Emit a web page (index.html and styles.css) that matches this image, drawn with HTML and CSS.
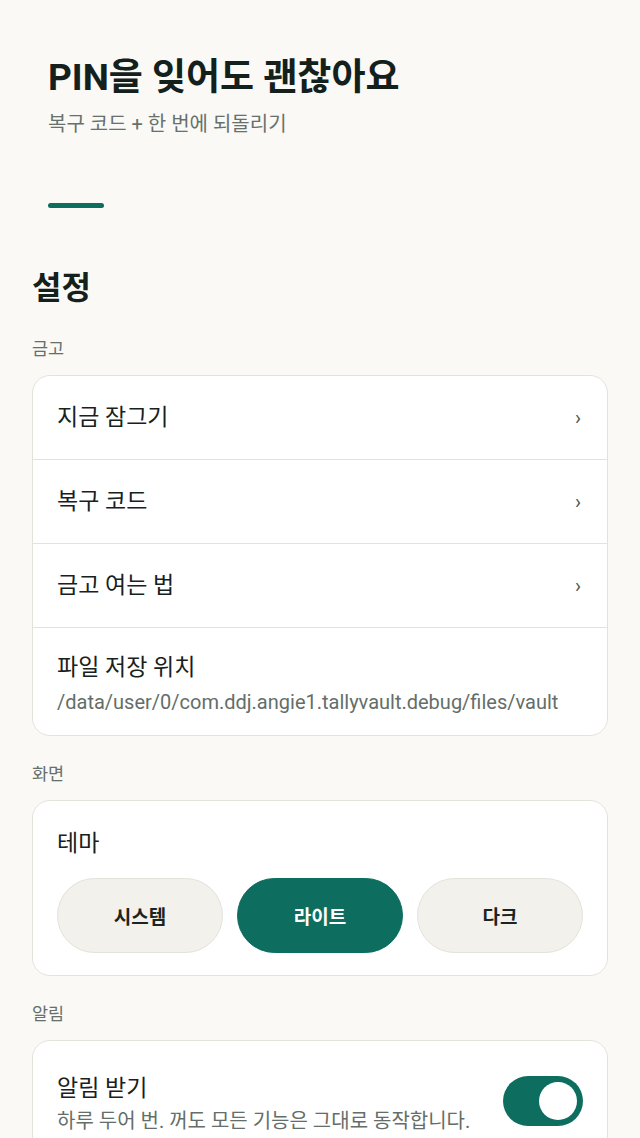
FILE: index.html
```html
<!DOCTYPE html>
<html lang="ko">
<head>
<meta charset="utf-8">
<link rel="stylesheet" href="styles.css">
</head>
<body>
<div class="page">
  <header class="hero">
    <h1 class="hero-title">PIN을 잊어도 괜찮아요</h1>
    <p class="hero-sub">복구 코드 + 한 번에 되돌리기</p>
    <div class="hero-bar"></div>
  </header>

  <h2 class="page-title">설정</h2>

  <section class="section">
    <div class="section-label">금고</div>
    <div class="card">
      <div class="row"><span class="row-title">지금 잠그기</span><span class="chev">›</span></div>
      <div class="row"><span class="row-title">복구 코드</span><span class="chev">›</span></div>
      <div class="row"><span class="row-title">금고 여는 법</span><span class="chev">›</span></div>
      <div class="row row-stack">
        <span class="row-title">파일 저장 위치</span>
        <span class="row-desc">/data/user/0/com.ddj.angie1.tallyvault.debug/files/vault</span>
      </div>
    </div>
  </section>

  <section class="section">
    <div class="section-label">화면</div>
    <div class="card theme-card">
      <div class="row-title">테마</div>
      <div class="seg">
        <button class="seg-btn">시스템</button>
        <button class="seg-btn active">라이트</button>
        <button class="seg-btn">다크</button>
      </div>
    </div>
  </section>

  <section class="section">
    <div class="section-label">알림</div>
    <div class="card">
      <div class="row row-switch">
        <div class="row-text">
          <span class="row-title">알림 받기</span>
          <span class="row-desc">하루 두어 번. 꺼도 모든 기능은 그대로 동작합니다.</span>
        </div>
        <div class="switch on"><span class="thumb"></span></div>
      </div>
    </div>
  </section>
</div>
</body>
</html>
```

FILE: styles.css
```css
* { box-sizing: border-box; }
html, body {
  margin: 0;
  padding: 0;
  background: #faf9f6;
}
body {
  font-family: Roboto, "Noto Sans CJK KR", sans-serif;
  color: #17211d;
}
.page {
  padding: 0 32px 40px 32px;
}
.hero {
  padding: 55px 16px 0 16px;
}
.hero-title {
  margin: 0;
  font-size: 37px;
  line-height: 46px;
  font-weight: 700;
  color: #14201c;
}
.hero-sub {
  margin: 9px 0 0 0;
  font-size: 20px;
  line-height: 28px;
  color: #67716c;
}
.hero-bar {
  margin-top: 65px;
  width: 56px;
  height: 5px;
  border-radius: 3px;
  background: #0d6e5f;
}
.page-title {
  margin: 60px 0 30px 0;
  font-size: 32px;
  line-height: 40px;
  font-weight: 700;
  color: #14201c;
}
.section + .section {
  margin-top: 27px;
}
.section-label {
  font-size: 17.5px;
  line-height: 22px;
  color: #66706b;
  margin-bottom: 15px;
}
.card {
  background: #ffffff;
  border: 1.5px solid #e3e2dc;
  border-radius: 18px;
  overflow: hidden;
}
.row {
  display: flex;
  align-items: center;
  justify-content: space-between;
  min-height: 84px;
  padding: 0 24px;
  border-bottom: 1px solid #e3e2dc;
}
.row:last-child { border-bottom: none; }
.row-title {
  font-size: 23px;
  line-height: 32px;
  color: #17211d;
}
.chev {
  font-size: 20px;
  line-height: 20px;
  color: #4d5753;
  padding-right: 2px;
}
.row-stack {
  flex-direction: column;
  align-items: flex-start;
  justify-content: flex-start;
  padding: 24px 24px 19px 24px;
  gap: 4px;
}
.row-desc {
  font-size: 20px;
  line-height: 28px;
  color: #646e69;
}
.theme-card {
  padding: 27px 24px 22px 24px;
}
.seg {
  display: flex;
  gap: 14px;
  margin-top: 18px;
}
.seg-btn {
  flex: 1;
  height: 75px;
  border-radius: 38px;
  border: 1.5px solid #e2e1da;
  background: #f2f1ec;
  font-family: Roboto, "Noto Sans CJK KR", sans-serif;
  font-size: 19px;
  font-weight: 700;
  color: #1c2420;
  padding: 0;
}
.seg-btn.active {
  background: #0d6e5f;
  border-color: #0d6e5f;
  color: #ffffff;
}
.row-switch {
  padding: 32px 24px 30px 24px;
  align-items: center;
}
.row-text {
  display: flex;
  flex-direction: column;
  gap: 2px;
}
.switch {
  width: 80px;
  height: 50px;
  border-radius: 25px;
  background: #0d6e5f;
  display: flex;
  align-items: center;
  justify-content: flex-end;
  padding-right: 6px;
  margin-bottom: 6px;
  flex-shrink: 0;
}
.thumb {
  width: 38px;
  height: 38px;
  border-radius: 50%;
  background: #ffffff;
}
```
